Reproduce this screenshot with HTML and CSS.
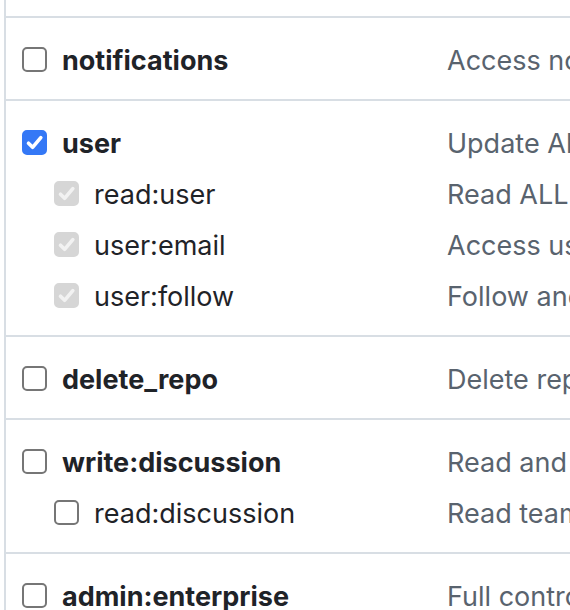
FILE: index.html
```html
<!DOCTYPE html>
<html lang="en">
<head>
<meta charset="utf-8">
<title>Scopes</title>
<link rel="stylesheet" href="styles.css">
</head>
<body>
<div class="scopes">
  <div class="top-gap"></div>

  <div class="group">
    <div class="row">
      <span class="scope"><span class="cb"></span><span class="name">notifications</span></span>
      <span class="desc">Access notifications</span>
    </div>
  </div>

  <div class="group">
    <div class="row">
      <span class="scope"><span class="cb checked"><svg viewBox="0 0 25 25"><path d="M6.5 13.2 L10.6 17.3 L18.8 7.6"/></svg></span><span class="name">user</span></span>
      <span class="desc">Update ALL user data</span>
    </div>
    <div class="row sub">
      <span class="scope"><span class="cb disabled"><svg viewBox="0 0 25 25"><path d="M6.5 13.2 L10.6 17.3 L18.8 7.6"/></svg></span><span class="name">read:user</span></span>
      <span class="desc">Read ALL user profile data</span>
    </div>
    <div class="row sub">
      <span class="scope"><span class="cb disabled"><svg viewBox="0 0 25 25"><path d="M6.5 13.2 L10.6 17.3 L18.8 7.6"/></svg></span><span class="name">user:email</span></span>
      <span class="desc">Access user email addresses (read-only)</span>
    </div>
    <div class="row sub">
      <span class="scope"><span class="cb disabled"><svg viewBox="0 0 25 25"><path d="M6.5 13.2 L10.6 17.3 L18.8 7.6"/></svg></span><span class="name">user:follow</span></span>
      <span class="desc">Follow and unfollow users</span>
    </div>
  </div>

  <div class="group">
    <div class="row">
      <span class="scope"><span class="cb"></span><span class="name">delete_repo</span></span>
      <span class="desc">Delete repositories</span>
    </div>
  </div>

  <div class="group">
    <div class="row">
      <span class="scope"><span class="cb"></span><span class="name">write:discussion</span></span>
      <span class="desc">Read and write team discussions</span>
    </div>
    <div class="row sub">
      <span class="scope"><span class="cb"></span><span class="name">read:discussion</span></span>
      <span class="desc">Read team discussions</span>
    </div>
  </div>

  <div class="group">
    <div class="row">
      <span class="scope"><span class="cb"></span><span class="name">admin:enterprise</span></span>
      <span class="desc">Full control of enterprises</span>
    </div>
  </div>
</div>
</body>
</html>
```

FILE: styles.css
```css
html, body {
  margin: 0;
  padding: 0;
  background: #ffffff;
  overflow: hidden;
}

body {
  width: 570px;
  height: 610px;
  font-family: Inter, "Liberation Sans", Arial, sans-serif;
  font-size: 27px;
  color: #1f2328;
}

.scopes {
  margin-left: 4px;
  border-left: 2px solid #d8dee4;
  height: 610px;
  width: 900px;
}

.top-gap {
  height: 16px;
}

.group {
  border-top: 2px solid #d8dee4;
  padding: 16px 0 14px 0;
}

.row {
  display: grid;
  grid-template-columns: 441px auto;
  align-items: center;
  height: 51px;
}

.scope {
  display: flex;
  align-items: center;
  gap: 15px;
  padding-left: 16px;
}

.row.sub .scope {
  padding-left: 48px;
}

.name {
  font-weight: 700;
  white-space: nowrap;
  line-height: 1;
  padding-top: 2px;
}

.row.sub .name {
  font-weight: 400;
}

.desc {
  color: #59636e;
  white-space: nowrap;
  line-height: 1;
  padding-top: 2px;
}

.cb {
  box-sizing: border-box;
  flex: none;
  width: 25px;
  height: 25px;
  border: 2px solid #767676;
  border-radius: 5px;
  background: #ffffff;
  position: relative;
}

.cb svg {
  position: absolute;
  left: -2px;
  top: -2px;
  width: 25px;
  height: 25px;
}

.cb svg path {
  fill: none;
  stroke: #ffffff;
  stroke-width: 3.6;
  stroke-linecap: round;
  stroke-linejoin: round;
}

.cb.checked {
  background: #3478f6;
  border-color: #3478f6;
}

.cb.disabled {
  background: #d6d6d6;
  border-color: #d6d6d6;
}

.cb.disabled svg path {
  stroke: #f2f2f2;
}
```
